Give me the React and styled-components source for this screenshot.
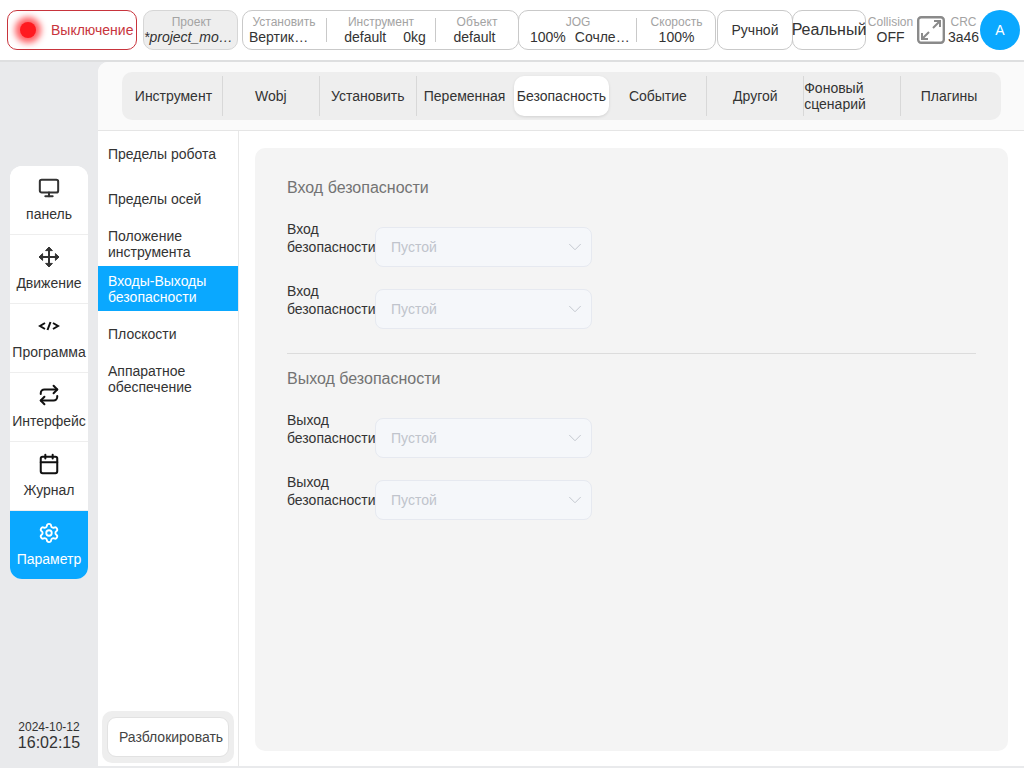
import React from "react";
import styled, { createGlobalStyle } from "styled-components";
import { Monitor, Repeat, Calendar, Settings, ChevronDown } from "lucide-react";

const Global = createGlobalStyle`
  html, body { margin: 0; padding: 0; }
  body { font-family: "Liberation Sans", Arial, sans-serif; background: #e9eaec; }
  * { box-sizing: border-box; }
`;
const Page = styled.div`
  width: 1024px; height: 768px; display: flex; flex-direction: column; overflow: hidden; background: #e9eaec;
`;
const TopBar = styled.header`
  height: 62px; flex: none; background: #fff; border-bottom: 2px solid #dedfe0;
  display: flex; align-items: center; padding: 0 4px 0 7px; color: #333;
`;
const PowerButton = styled.div`
  width: 130px; height: 40px; flex: none; border: 1px solid #c8343c; border-radius: 10px; display: flex; align-items: center;
  padding-left: 12px; gap: 15px; color: #c8343c; font-size: 14px; white-space: nowrap; margin-right: 6px;
`;
const Lamp = styled.span`
  width: 16px; height: 16px; border-radius: 50%; background: #ff1a1f; box-shadow: 0 0 6px 5px rgba(255, 30, 35, .7); flex: none;
`;
const Group = styled.div`
  height: 40px; width: ${p => p.$w}px; margin-left: ${p => p.$ml || 0}px; flex: none; border: 1px solid ${p => p.$muted ? "#d6d6d6" : "#c9c9c9"}; border-radius: 10px;
  background: ${p => p.$muted ? "#eeeeee" : "#fff"}; display: flex; align-items: center; padding: 0 1px;
`;
const Cell = styled.div`
  flex: ${p => p.$w ? `0 0 ${p.$w}px` : 1}; min-width: 0; text-align: center; display: flex; flex-direction: column; justify-content: center; height: 24px;
  padding: 0 ${p => p.$pr || 0}px 0 ${p => p.$pl || 0}px;
  & + & { border-left: 1px solid #c9c9c9; }
`;
const Cap = styled.div`
  flex: none; font-size: 12px; line-height: 12px; color: #a3a3a3; margin-bottom: 1px; white-space: nowrap;
  padding: 0 ${p => p.$pr || 0}px 0 ${p => p.$pl || 0}px;
`;
const Val = styled.div`
  flex: none; font-size: 14px; line-height: 16px; color: #333; white-space: nowrap; font-style: ${p => p.$italic ? "italic" : "normal"};
  display: flex; justify-content: ${p => p.$start ? "flex-start" : "center"}; gap: 17px; padding: 0 ${p => p.$pr || 0}px 0 ${p => p.$pl || 0}px;
`;
const Clip = styled.span`
  overflow: hidden; text-overflow: ellipsis; display: block; max-width: ${p => p.$w}px; margin-left: ${p => p.$ml || 0}px;
`;
const Mode = styled.div`
  height: 40px; width: ${p => p.$w}px; flex: none; margin-left: ${p => p.$ml || 0}px; border: 1px solid #c9c9c9; border-radius: 10px; display: flex; align-items: center; justify-content: center;
  font-size: ${p => p.$fs}px; white-space: nowrap; color: #333;
`;
const Stat = styled.div`
  width: ${p => p.$w}px; flex: none; text-align: center; margin-left: ${p => p.$ml || 0}px; white-space: nowrap;
`;
const Expand = styled.svg`
  width: 28px; height: 28px; flex: none; margin: 0 1px 0 2px;
`;
const Avatar = styled.div`
  width: 40px; height: 40px; border-radius: 50%; background: #0aa8ff; color: #fff; display: flex; align-items: center; justify-content: center; font-size: 14px; flex: none;
`;
const Body = styled.div`
  flex: 1; display: flex; min-height: 0;
`;
const Rail = styled.aside`
  width: 98px; flex: none; padding: 104px 10px 0; display: flex; flex-direction: column;
`;
const Nav = styled.nav`
  width: 78px; border-radius: 12px; background: #fff; overflow: hidden; display: flex; flex-direction: column;
`;
const NavItem = styled.div`
  height: ${p => p.$active ? 68 : 69}px; display: flex; flex-direction: column; align-items: center; padding-top: ${p => p.$pt || 11}px; white-space: nowrap; font-size: 14px; line-height: 16px;
  color: ${p => p.$active ? "#fff" : "#333"}; background: ${p => p.$active ? "#0aa8ff" : "#fff"};
  border-bottom: ${p => p.$active ? "0" : "1px solid #eeeeee"};
  & svg { flex: none; }
`;
const NavLabel = styled.span`
  margin-top: ${p => p.$gap ?? 7}px; width: 78px; display: flex; justify-content: center;
`;
const Clock = styled.div`
  margin: auto -10px 16px; text-align: center; color: #333;
`;
const DateText = styled.div`
  font-size: 12px; line-height: 14px;
`;
const TimeText = styled.div`
  font-size: 16px; line-height: 18px;
`;
const Main = styled.main`
  flex: 1; min-width: 0; display: flex; flex-direction: column; background: #fff; border-radius: 10px 0 0 0; margin-bottom: 2px; overflow: hidden;
`;
const TabWrap = styled.div`
  height: 69px; flex: none; background: #fafafa; border-bottom: 1px solid #e5e5e5; padding: 10px 23px 0 24px;
`;
const Tabs = styled.div`
  height: 48px; background: #eeeeee; border-radius: 10px; padding: 4px 4px 4px 3px; display: grid; grid-template-columns: repeat(9, 1fr);
`;
const Tab = styled.div`
  height: 40px; display: flex; align-items: center; justify-content: ${p => p.$left ? "flex-start" : "center"}; font-size: 14px; line-height: 16px; color: #333; white-space: ${p => p.$left ? "normal" : "nowrap"};
  border-left: ${p => p.$sep ? "1px solid #d8d8d8" : "0"};
  ${p => p.$active && `background:#fff;border-radius:10px;box-shadow:0 1px 3px rgba(0,0,0,.12);margin-left:1px;`}
`;
const Lower = styled.div`
  flex: 1; min-height: 0; display: flex;
`;
const SideMenu = styled.div`
  width: 141px; flex: none; border-right: 1px solid #e8e8e8; display: flex; flex-direction: column;
`;
const MenuItem = styled.div`
  height: 45px; padding: 0 10px; display: flex; align-items: center; font-size: 14px; line-height: 16px;
  color: ${p => p.$active ? "#fff" : "#333"}; background: ${p => p.$active ? "#0aa8ff" : "transparent"};
`;
const UnlockOuter = styled.div`
  margin: auto 4px 3px; height: 52px; background: #eeeeee; border-radius: 10px; padding: 6px 5px;
`;
const Unlock = styled.div`
  height: 40px; background: #fff; border: 1px solid #e2e2e2; border-radius: 9px; display: flex; align-items: center; justify-content: center; padding-left: 6px; font-size: 14px; color: #444; white-space: nowrap;
`;
const ContentWrap = styled.div`
  flex: 1; padding: 17px 16px 15px; min-width: 0;
`;
const Card = styled.section`
  height: 603px; background: #f4f4f4; border-radius: 10px; padding: 30px 32px;
`;
const Title = styled.h2`
  margin: 0 0 30px; font-weight: 400; font-size: 16px; line-height: 19px; color: #737373;
`;
const Row = styled.div`
  display: flex; align-items: flex-start; height: 40px; margin-bottom: 22px;
`;
const Label = styled.div`
  width: 88px; flex: none; margin-top: -7px; font-size: 14px; line-height: 18px; color: #333;
`;
const Select = styled.div`
  width: 217px; height: 40px; border: 1px solid #e6e9f0; border-radius: 8px; background: #f5f7fa; color: #c0c4cc; font-size: 14px; display: flex; align-items: center; justify-content: space-between; padding: 0 5px 0 15px;
`;
const Divider = styled.hr`
  border: 0; border-top: 1px solid #dcdcdc; margin: 24px 0 15px;
`;
const CodeGlyph = styled.svg`
  width: 24px; height: 24px;
`;
const MoveGlyph = styled.svg`
  width: 22px; height: 22px;
`;

const groups = [
  ["Вход безопасности", ["Вход безопасности", "Вход безопасности"]],
  ["Выход безопасности", ["Выход безопасности", "Выход безопасности"]],
];
const tabs = ["Инструмент", "Wobj", "Установить", "Переменная", "Безопасность", "Событие", "Другой", "Фоновый сценарий", "Плагины"];
const menu = ["Пределы робота", "Пределы осей", "Положение инструмента", "Входы-Выходы безопасности", "Плоскости", "Аппаратное обеспечение"];

export default function App() {
  return (
    <Page>
      <Global />
      <TopBar>
        <PowerButton><Lamp /><span>Выключение</span></PowerButton>
        <Group $w={95} $muted>
          <Cell><Cap $pl={2}>Проект</Cap><Val $italic $start><Clip $w={90} $ml={-1}>*project_model</Clip></Val></Cell>
        </Group>
        <Group $w={277} $ml={4}>
          <Cell $w={82}><Cap $pr={2}>Установить</Cap><Val $start $pl={5}><Clip $w={64}>Вертикально</Clip></Val></Cell>
          <Cell $w={109}><Cap>Инструмент</Cap><Val $pl={8}><span>default</span><span>0kg</span></Val></Cell>
          <Cell><Cap $pl={1}>Объект</Cap><Val $pr={4}>default</Val></Cell>
        </Group>
        <Group $w={198} $ml={-1}>
          <Cell $w={116}><Cap>JOG</Cap><Val $start $pl={10}><span>100%</span><Clip $w={55} $ml={-8}>Сочленение</Clip></Val></Cell>
          <Cell $pl={2}><Cap>Скорость</Cap><Val>100%</Val></Cell>
        </Group>
        <Mode $w={76} $ml={1} $fs={14}>Ручной</Mode>
        <Mode $w={74} $ml={-1} $fs={16}>Реальный</Mode>
        <Stat $w={49}><Cap>Collision</Cap><Val>OFF</Val></Stat>
        <Expand viewBox="0 0 28 28" fill="none" stroke="#8a8a8a" strokeWidth="2.4">
          <rect x="1.2" y="1.2" width="25.6" height="25.6" rx="3" />
          <path d="M16 12l7-7M17 5h6v6M12 16l-7 7M11 23H5v-6" strokeWidth="2" />
        </Expand>
        <Stat $w={33} $ml={1}><Cap>CRC</Cap><Val>3a46</Val></Stat>
        <Avatar>A</Avatar>
      </TopBar>
      <Body>
        <Rail>
          <Nav>
            <NavItem><Monitor size={22} strokeWidth={2.2} color="#333" /><NavLabel>панель</NavLabel></NavItem>
            <NavItem>
              <MoveGlyph viewBox="0 0 22 22" fill="#333" stroke="#333" strokeWidth="1" strokeLinejoin="round">
                <path d="M11 4v14M4 11h14" strokeWidth="2" fill="none" />
                <path d="M11 1l3.4 3.6H7.6zM11 21l3.4-3.6H7.6zM1 11l3.6-3.4v6.8zM21 11l-3.6-3.4v6.8z" />
              </MoveGlyph>
              <NavLabel>Движение</NavLabel>
            </NavItem>
            <NavItem $pt={10}>
              <CodeGlyph viewBox="0 0 24 24" fill="none" stroke="#111" strokeWidth="2"><path d="M8 9l-5 3 5 3M16 9l5 3-5 3M13.5 8l-3 8" /></CodeGlyph>
              <NavLabel $gap={6}>Программа</NavLabel>
            </NavItem>
            <NavItem><Repeat size={22} strokeWidth={2.2} color="#111" /><NavLabel>Интерфейс</NavLabel></NavItem>
            <NavItem><Calendar size={22} strokeWidth={2.2} color="#111" /><NavLabel>Журнал</NavLabel></NavItem>
            <NavItem $active><Settings size={22} strokeWidth={2} color="#fff" /><NavLabel>Параметр</NavLabel></NavItem>
          </Nav>
          <Clock><DateText>2024-10-12</DateText><TimeText>16:02:15</TimeText></Clock>
        </Rail>
        <Main>
          <TabWrap>
            <Tabs>
              {tabs.map((t, i) => (
                <Tab key={t} $active={i === 4} $sep={i > 0 && i !== 4 && i !== 5} $left={i === 7}>{t}</Tab>
              ))}
            </Tabs>
          </TabWrap>
          <Lower>
            <SideMenu>
              {menu.map((m, i) => <MenuItem key={m} $active={i === 3}>{m}</MenuItem>)}
              <UnlockOuter><Unlock>Разблокировать</Unlock></UnlockOuter>
            </SideMenu>
            <ContentWrap>
              <Card>
                {groups.map(([title, rows], i) => (
                  <React.Fragment key={title}>
                    {i > 0 && <Divider />}
                    <Title>{title}</Title>
                    {rows.map((r, j) => (
                      <Row key={j}>
                        <Label>{r}</Label>
                        <Select>Пустой<ChevronDown size={22} strokeWidth={1} color="#c0c4cc" /></Select>
                      </Row>
                    ))}
                  </React.Fragment>
                ))}
              </Card>
            </ContentWrap>
          </Lower>
        </Main>
      </Body>
    </Page>
  );
}
